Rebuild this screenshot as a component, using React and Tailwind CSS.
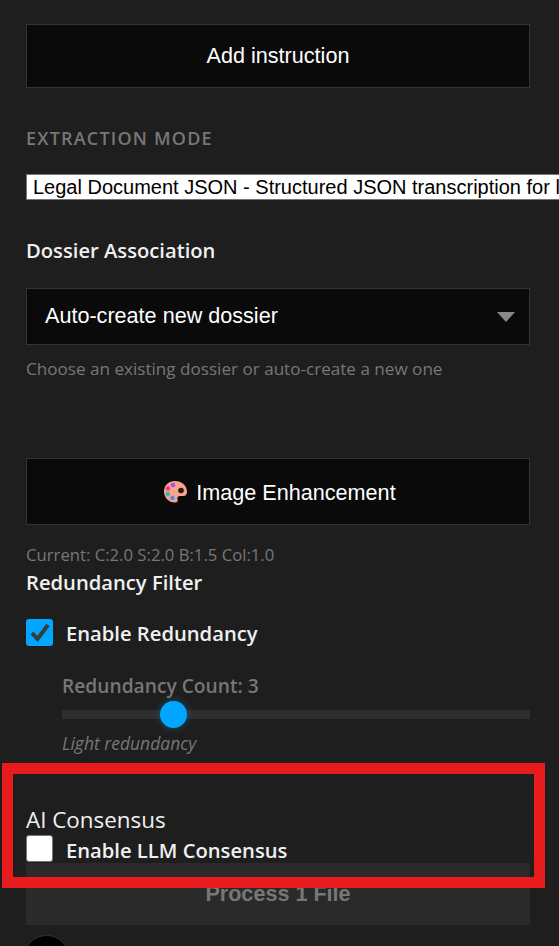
export default function App() {
  return (
    <div className="relative h-[946px] w-[559px] overflow-hidden bg-[#1e1e1e] px-[26px] pt-[24px] text-white [font-family:'Open_Sans',sans-serif]">
      {/* Add instruction */}
      <button className="flex h-[64px] w-[504px] items-center justify-center border border-[#333333] bg-[#0a0a0a] text-[21.6px] text-white [font-family:'Liberation_Sans',sans-serif]">
        Add instruction
      </button>

      <div className="mt-[37px] h-[26px] text-[18px] leading-[26px] font-semibold tracking-[1.2px] text-[#777777]">
        EXTRACTION MODE
      </div>

      {/* extraction select, wider than the panel */}
      <div className="mt-[23px] flex h-[26px] w-[700px] items-center border border-[#767676] bg-white pl-[6px] text-[20px] whitespace-nowrap text-black [font-family:'Liberation_Sans',sans-serif]">
        Legal Document JSON - Structured JSON transcription for legal documents
      </div>

      <div className="mt-[35px] h-[30px] text-[20.2px] leading-[30px] font-semibold text-[#f0f0f0]">
        Dossier Association
      </div>

      <div className="mt-[23px] flex h-[57px] w-[504px] items-center justify-between border border-[#333333] bg-[#0a0a0a] pr-[14px] pl-[18px]">
        <span className="text-[21.6px] text-white [font-family:'Liberation_Sans',sans-serif]">Auto-create new dossier</span>
        <svg width="18" height="10" viewBox="0 0 18 10">
          <polygon points="0,0 18,0 9,10" fill="#888888" />
        </svg>
      </div>

      <div className="mt-[12px] h-[24px] text-[17.1px] leading-[24px] text-[#777777]">
        Choose an existing dossier or auto-create a new one
      </div>

      {/* Image Enhancement */}
      <button className="mt-[77px] flex h-[67px] w-[504px] items-center justify-center gap-[9px] border border-[#333333] bg-[#0a0a0a] pt-[4px] pl-[3px] text-[21.6px] text-white [font-family:'Liberation_Sans',sans-serif]">
        <svg className="-mt-[4px]" width="24" height="23" viewBox="0 0 24 23">
          <path d="M12 1C5.5 1 1 5.5 1 11.5S5.5 22.5 12 22.5c2.5 0 3-1.5 2.5-3.2-.6-2 .4-3.3 2.5-3.3h3.5c2.3 0 3.5-1.6 3.5-4.2C24 5.5 18.5 1 12 1Z" fill="#f7a58f" />
          <circle cx="18" cy="10.5" r="2.8" fill="#2a1a14" />
          <circle cx="10" cy="5" r="2.3" fill="#b14fd8" />
          <circle cx="5" cy="8.5" r="2.3" fill="#ef3f7c" />
          <circle cx="4.8" cy="14" r="2.3" fill="#3fb5b0" />
          <circle cx="9.5" cy="18" r="2.3" fill="#4f8fe8" />
        </svg>
        Image Enhancement
      </button>

      <div className="mt-[20px] h-[20px] text-[16.7px] leading-[20px] text-[#777777]">
        Current: C:2.0 S:2.0 B:1.5 Col:1.0
      </div>

      <div className="mt-[3px] h-[28px] text-[20.2px] leading-[28px] font-semibold text-[#f0f0f0]">
        Redundancy Filter
      </div>

      <div className="mt-[23px] flex h-[27px] items-center gap-[13px]">
        <div className="flex h-[27px] w-[27px] items-center justify-center rounded-[3px] bg-[#00a6ff]">
          <svg width="21" height="19" viewBox="0 0 21 19">
            <path d="M3 10l5.5 6L19 2" fill="none" stroke="#3a3a3a" strokeWidth="4" />
          </svg>
        </div>
        <span className="pt-[2px] text-[20.2px] font-semibold text-[#f0f0f0]">Enable Redundancy</span>
      </div>

      <div className="ml-[36px]">
        <div className="mt-[27px] h-[26px] text-[19.2px] leading-[26px] font-semibold text-[#777777]">
          Redundancy Count: 3
        </div>
        <div className="relative mt-[11px] h-[9px] w-[468px] bg-[#2e2e2e]">
          <div className="absolute top-[-9px] left-[98px] h-[27px] w-[27px] rounded-full bg-[#00a6ff] shadow-[0_0_8px_rgba(0,166,255,0.35)]" />
        </div>
        <div className="mt-[13px] h-[22px] text-[17.5px] leading-[22px] text-[#777777] italic">
          Light redundancy
        </div>
      </div>

      <div className="mt-[52px] h-[29px] text-[22.4px] leading-[28px] text-[#f0f0f0]">
        AI Consensus
      </div>

      <div className="flex h-[27px] items-center gap-[13px]">
        <div className="h-[27px] w-[27px] rounded-[3px] border border-[#767676] bg-white" />
        <span className="pt-[3px] text-[20.2px] font-semibold text-[#f0f0f0]">Enable LLM Consensus</span>
      </div>

      <button className="mt-[1px] flex h-[62px] w-[504px] items-center justify-center bg-[#2a2a2a] text-[21.6px] font-bold text-[#777777] [font-family:'Liberation_Sans',sans-serif]">
        Process 1 File
      </button>

      <div className="mt-[10px] -ml-[3px] h-[47px] w-[47px] rounded-full border border-[#333333] bg-black" />

      {/* red annotation box on top of the screenshot */}
      <div className="absolute top-[763px] left-[2px] h-[125px] w-[543px] border-[11px] border-[#e81c1c]" />
    </div>
  );
}
